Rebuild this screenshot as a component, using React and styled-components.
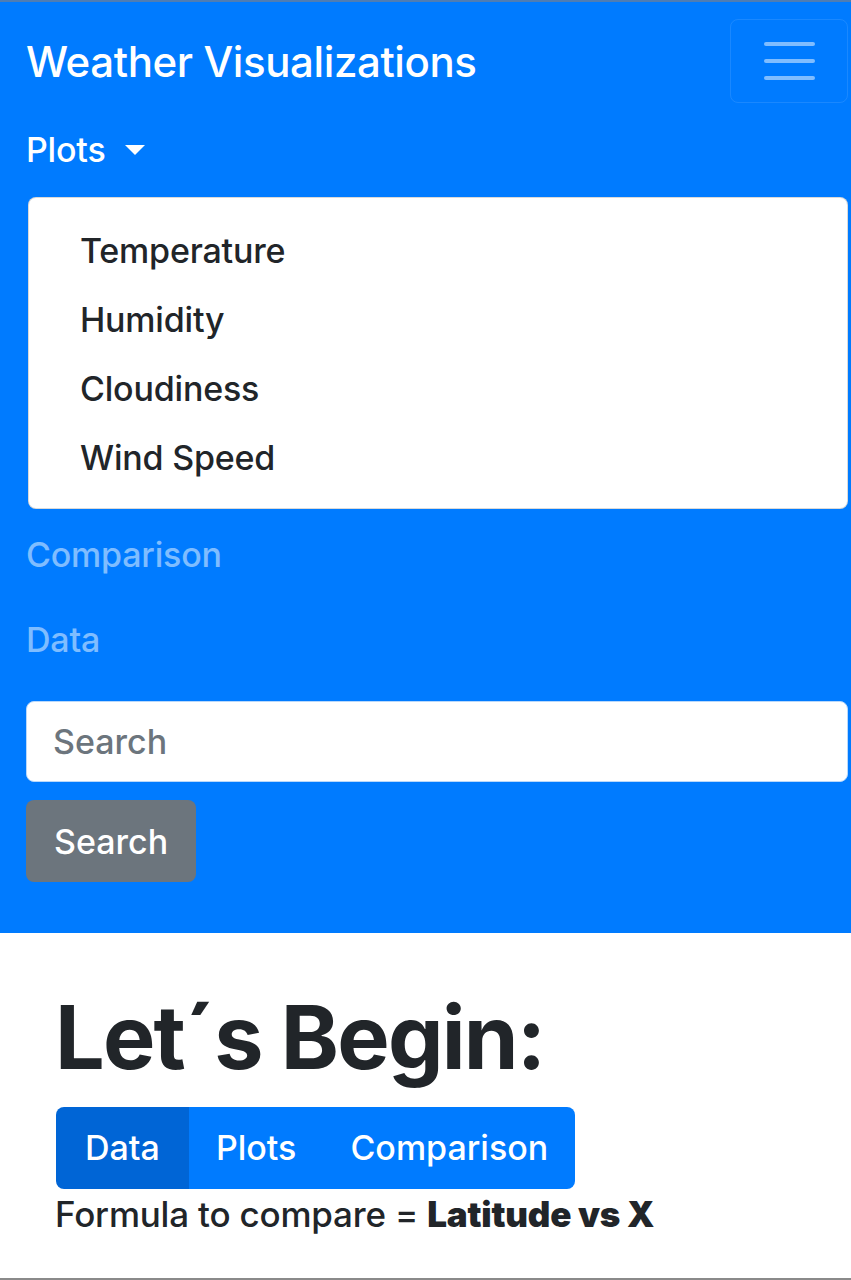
import React, { useState } from 'react';
import styled, { createGlobalStyle } from 'styled-components';

const GlobalStyle = createGlobalStyle`
  html, body {
    margin: 0;
    padding: 0;
    background: #fff;
  }
  body {
    font-family: Inter, "Noto Sans", "Liberation Sans", sans-serif;
    font-size: 34px;
    line-height: 1.5;
    color: #212529;
  }
  * { box-sizing: border-box; }
`;

const Page = styled.div`
  height: 1280px;
  border-top: 2px solid #4f7db3;
  border-bottom: 2px solid #8a8a8a;
  display: flex;
  flex-direction: column;
`;

const Navbar = styled.nav`
  background: #007bff;
  padding: 17px 3px 51px 26px;
  display: flex;
  flex-direction: column;
`;

const BrandRow = styled.div`
  display: flex;
  align-items: center;
  justify-content: space-between;
`;

const Brand = styled.a`
  color: #fff;
  font-size: 42px;
  font-weight: 500;
  letter-spacing: -0.4px;
  text-decoration: none;
  line-height: 1.5;
`;

const Toggler = styled.button`
  width: 118px;
  height: 84px;
  border: 1.5px solid rgba(255, 255, 255, 0.1);
  border-radius: 8px;
  background: transparent;
  display: flex;
  flex-direction: column;
  align-items: center;
  justify-content: center;
  gap: 13px;
  padding: 0;
`;

const TogglerBar = styled.span`
  display: block;
  width: 51px;
  height: 4px;
  border-radius: 2px;
  background: rgba(255, 255, 255, 0.5);
`;

const NavList = styled.ul`
  list-style: none;
  margin: 4px 0 0;
  padding: 0;
  display: flex;
  flex-direction: column;
`;

const NavLink = styled.a`
  display: flex;
  align-items: center;
  padding: 17px 0;
  line-height: 51px;
  font-weight: 500;
  letter-spacing: -0.2px;
  color: ${({ active }) => (active ? '#fff' : 'rgba(255, 255, 255, 0.5)')};
  text-decoration: none;
  cursor: pointer;
`;

const Caret = styled.span`
  display: inline-block;
  margin-left: 19px;
  border-top: 10px solid #fff;
  border-left: 10px solid transparent;
  border-right: 10px solid transparent;
`;

const Menu = styled.div`
  background: #fff;
  border: 1px solid rgba(0, 0, 0, 0.15);
  border-radius: 8px;
  margin: 5px 0 3px 2px;
  padding: 18px 0 16px;
`;

const MenuItem = styled.a`
  display: block;
  padding: 9px 51px;
  line-height: 51px;
  font-weight: 500;
  letter-spacing: -0.2px;
  color: #212529;
  text-decoration: none;
`;

const SearchForm = styled.form`
  display: flex;
  flex-direction: column;
  align-items: flex-start;
  gap: 18px;
  margin-top: 19px;
`;

const SearchInput = styled.input`
  width: 100%;
  height: 81px;
  padding: 0 26px;
  border: 1.5px solid #b8d8fb;
  border-radius: 8px;
  font: inherit;
  font-weight: 500;
  color: #495057;
  background: #fff;
  outline: none;
  &::placeholder {
    color: #6c757d;
  }
`;

const Button = styled.button`
  font: inherit;
  font-weight: 500;
  color: #fff;
  border: none;
  padding: 0 28px;
  height: 82px;
  line-height: 51px;
  background: ${({ variant }) => (variant === 'secondary' ? '#6c757d' : '#007bff')};
  border-radius: 8px;
`;

const Main = styled.main`
  padding: 52px 30px 0 55px;
`;

const Title = styled.h1`
  margin: 0 0 16px;
  font-size: 88px;
  font-weight: 700;
  letter-spacing: -1.8px;
  line-height: 1.2;
  color: #212529;
`;

const ButtonGroup = styled.div`
  display: inline-flex;
  border-radius: 8px;
  overflow: hidden;
  margin-left: 1px;
`;

const GroupButton = styled.button`
  font: inherit;
  font-weight: 500;
  color: #fff;
  border: none;
  height: 82px;
  padding: 0 ${({ pad }) => pad}px;
  background: ${({ active }) => (active ? '#0065d6' : '#007bff')};
  cursor: pointer;
`;

const Formula = styled.p`
  margin: 0;
  font-size: 35px;
  line-height: 1.45;
  font-weight: 500;
  letter-spacing: -0.2px;
`;

const Strong = styled.b`
  font-weight: 900;
  letter-spacing: -0.2px;
`;

const plotItems = ['Temperature', 'Humidity', 'Cloudiness', 'Wind Speed'];

export default function App() {
  const [tab, setTab] = useState('Data');

  return (
    <Page>
      <GlobalStyle />
      <Navbar>
        <BrandRow>
          <Brand>Weather Visualizations</Brand>
          <Toggler aria-label="Toggle navigation">
            <TogglerBar />
            <TogglerBar />
            <TogglerBar />
          </Toggler>
        </BrandRow>
        <NavList>
          <li>
            <NavLink active>
              Plots
              <Caret />
            </NavLink>
            <Menu>
              {plotItems.map((item) => (
                <MenuItem key={item}>{item}</MenuItem>
              ))}
            </Menu>
          </li>
          <li>
            <NavLink>Comparison</NavLink>
          </li>
          <li>
            <NavLink>Data</NavLink>
          </li>
        </NavList>
        <SearchForm onSubmit={(e) => e.preventDefault()}>
          <SearchInput type="search" placeholder="Search" />
          <Button variant="secondary" type="submit">Search</Button>
        </SearchForm>
      </Navbar>
      <Main>
        <Title>Let´s Begin:</Title>
        <ButtonGroup>
          {[
            ['Data', 29],
            ['Plots', 27],
            ['Comparison', 27],
          ].map(([name, pad]) => (
            <GroupButton key={name} pad={pad} active={tab === name} onClick={() => setTab(name)}>
              {name}
            </GroupButton>
          ))}
        </ButtonGroup>
        <Formula>
          Formula to compare = <Strong>Latitude vs X</Strong>
        </Formula>
      </Main>
    </Page>
  );
}
